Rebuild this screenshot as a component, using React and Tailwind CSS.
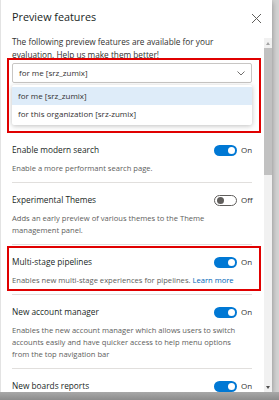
import React from 'react';

const features = [
  { title: 'Enable modern search', lines: ['Enable a more performant search page.'], on: true },
  { title: 'Experimental Themes', lines: ['Adds an early preview of various themes to the Theme', 'management panel.'], on: false },
  { title: 'Multi-stage pipelines', lines: ['Enables new multi-stage experiences for pipelines.'], link: 'Learn more', on: true },
  {
    title: 'New account manager',
    lines: [
      'Enables the new account manager which allows users to switch',
      'accounts easily and have quicker access to help menu options',
      'from the top navigation bar',
    ],
    on: true,
  },
  { title: 'New boards reports', lines: [], on: true },
];

function Toggle({ on }) {
  return (
    <div className="flex items-center gap-[4px]">
      {on ? (
        <div className="w-[23px] h-[11px] rounded-full bg-[#0078d4] flex items-center justify-end pr-[2px]">
          <div className="w-[7px] h-[7px] rounded-full bg-white" />
        </div>
      ) : (
        <div className="w-[23px] h-[11px] rounded-full border border-[#605e5c] bg-white flex items-center pl-[2px]">
          <div className="w-[7px] h-[7px] rounded-full bg-[#605e5c]" />
        </div>
      )}
      <span className="text-[8px] text-[#323130] w-[11px]">{on ? 'On' : 'Off'}</span>
    </div>
  );
}

export default function App() {
  return (
    <div className="w-[279px] h-[400px] bg-[#d3d3d3] flex flex-col overflow-hidden font-['Open_Sans',sans-serif]">
      <div className="flex h-[392px]">
        <div className="w-[272px] bg-white border-l border-[#e3e3e3] flex flex-col shadow-[0_2px_6px_rgba(0,0,0,0.35)]">
          {/* Header */}
          <div className="h-[35px] flex items-center justify-between pl-[11px] pr-[10px] shrink-0">
            <h1 className="text-[10.8px] text-[#201f1e]">Preview features</h1>
            <svg width="11" height="11" viewBox="0 0 11 11" className="mt-[2px]">
              <path d="M1 1 L10 10 M10 1 L1 10" stroke="#605e5c" strokeWidth="1" fill="none" />
            </svg>
          </div>

          {/* Body */}
          <div className="flex flex-1 min-h-0">
            <div className="flex-1 overflow-hidden relative pl-[11px] pr-[12px]">
              <p className="text-[8.25px] leading-[13px] text-[#323130] whitespace-nowrap">
                The following preview features are available for your
                <br />
                evaluation. Help us make them better!
              </p>

              <div className="mt-[2px] h-[20px] border border-[#c8c6c4] rounded-[2px] flex items-center justify-between px-[6px]">
                <span className="text-[8px] text-[#323130]">for me [srz_zumix]</span>
                <svg width="8" height="5" viewBox="0 0 8 5">
                  <path d="M0.5 0.5 L4 4 L7.5 0.5" stroke="#605e5c" strokeWidth="0.9" fill="none" />
                </svg>
              </div>
              <div className="mt-[2px] py-[2px] bg-white shadow-[0_1px_5px_rgba(0,0,0,0.25)] rounded-[2px]">
                <div className="h-[18px] flex items-center px-[6px] bg-[#deecf9] text-[8px] text-[#323130]">
                  for me [srz_zumix]
                </div>
                <div className="h-[18px] flex items-center px-[6px] text-[8px] text-[#323130]">
                  for this organization [srz-zumix]
                </div>
              </div>

              <div className="mt-[8px]">
                {features.map((f, i) => (
                  <div
                    key={f.title}
                    className={`pt-[10px] pb-[8px] ${i < features.length - 1 ? 'border-b border-[#e1dfdd]' : ''}`}
                  >
                    <div className="flex items-center justify-between h-[14px]">
                      <span className="text-[8.3px] text-[#201f1e]">{f.title}</span>
                      <Toggle on={f.on} />
                    </div>
                    {f.lines.length > 0 && (
                      <p className="mt-[5px] text-[7.6px] leading-[12px] text-[#605e5c] whitespace-nowrap">
                        {f.lines.map((line, j) => (
                          <React.Fragment key={j}>
                            {j > 0 && <br />}
                            {line}
                          </React.Fragment>
                        ))}
                        {f.link && <span className="text-[#0066b8]"> {f.link}</span>}
                      </p>
                    )}
                  </div>
                ))}
              </div>

              {/* annotation boxes */}
              <div className="absolute left-[6px] top-[23px] w-[254px] h-[75px] border-2 border-[#e00000]" />
              <div className="absolute left-[6px] top-[211px] w-[254px] h-[45px] border-2 border-[#e00000]" />
            </div>

            {/* Scrollbar */}
            <div className="w-[8px] mt-[3px] bg-[#f1f1f1] flex flex-col items-center">
              <div className="h-[10px] flex items-center justify-center">
                <div className="w-0 h-0 border-l-[2.5px] border-r-[2.5px] border-b-[3px] border-l-transparent border-r-transparent border-b-[#a3a3a3]" />
              </div>
              <div className="w-[8px] h-[127px] bg-[#c1c1c1]" />
              <div className="flex-1" />
              <div className="h-[10px] flex items-center justify-center">
                <div className="w-0 h-0 border-l-[2.5px] border-r-[2.5px] border-t-[3px] border-l-transparent border-r-transparent border-t-[#505050]" />
              </div>
            </div>
          </div>
        </div>
        <div className="flex-1" />
      </div>
      <div className="flex-1 bg-gradient-to-b from-[#a8a8a8] to-[#8c8c8c]" />
    </div>
  );
}
